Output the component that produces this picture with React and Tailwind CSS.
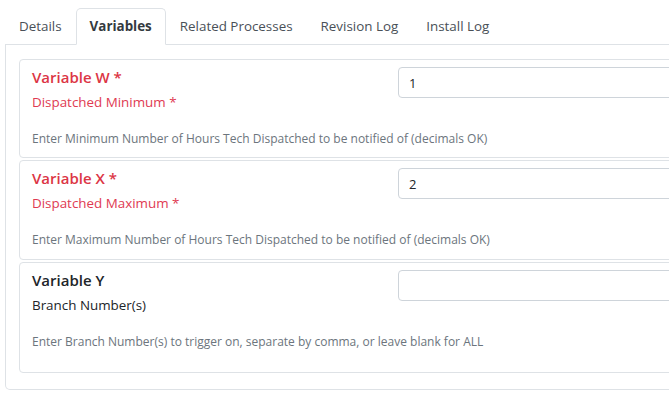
const tabs = ['Details', 'Variables', 'Related Processes', 'Revision Log', 'Install Log'];

const fields = [
  {
    name: 'Variable W',
    label: 'Dispatched Minimum',
    required: true,
    value: '1',
    help: 'Enter Minimum Number of Hours Tech Dispatched to be notified of (decimals OK)',
    pb: 'pb-[9px]',
  },
  {
    name: 'Variable X',
    label: 'Dispatched Maximum',
    required: true,
    value: '2',
    help: 'Enter Maximum Number of Hours Tech Dispatched to be notified of (decimals OK)',
    pb: 'pb-[10px]',
  },
  {
    name: 'Variable Y',
    label: 'Branch Number(s)',
    required: false,
    value: '',
    help: 'Enter Branch Number(s) to trigger on, separate by comma, or leave blank for ALL',
    pb: 'pb-[21px]',
  },
];

function FieldCard({ field }) {
  const titleColor = field.required ? 'text-[#dc3545]' : 'text-[#212529]';
  const subColor = field.required ? 'text-[#e03a52]' : 'text-[#212529]';
  return (
    <div className={`border border-[#dee2e6] rounded-[4px] pl-[12px] pt-[5px] ${field.pb}`}>
      <div className="flex">
        <div className="w-[366px] shrink-0">
          <div className={`text-[15px] leading-[24px] font-semibold ${titleColor}`}>
            {field.name}
            {field.required && ' *'}
          </div>
          <div className={`mt-[3px] text-[13.4px] leading-[21px] ${subColor}`}>
            {field.label}
            {field.required && ' *'}
          </div>
        </div>
        <input
          readOnly
          value={field.value}
          className="mt-[2px] h-[31px] w-[400px] shrink-0 rounded-[4px] border border-[#ced4da] px-[10px] text-[13px] text-[#212529] outline-none"
        />
      </div>
      <div className="mt-[17px] text-[12px] leading-[18px] text-[#6c757d]">{field.help}</div>
    </div>
  );
}

export default function App() {
  return (
    <div
      className="w-[669px] h-[402px] overflow-hidden bg-white"
      style={{ fontFamily: '"Open Sans", "Noto Sans", sans-serif' }}
    >
      <div className="w-[800px] pl-[5px] pt-[8px]">
        <ul className="flex border-b border-[#dee2e6]">
          {tabs.map((t) => (
            <li
              key={t}
              className={`-mb-px px-[13px] h-[37px] flex items-center text-[13.4px] rounded-t-[5px] border ${
                t === 'Variables'
                  ? 'border-[#dee2e6] border-b-white bg-white font-bold text-[#343a40]'
                  : 'border-transparent text-[#495057]'
              }`}
            >
              {t}
            </li>
          ))}
        </ul>
        <div className="border border-t-0 border-[#dee2e6] rounded-b-[5px] pl-[13px] pt-[14px] pb-[16px] flex flex-col gap-[2px]">
          {fields.map((f) => (
            <FieldCard key={f.name} field={f} />
          ))}
        </div>
      </div>
    </div>
  );
}
